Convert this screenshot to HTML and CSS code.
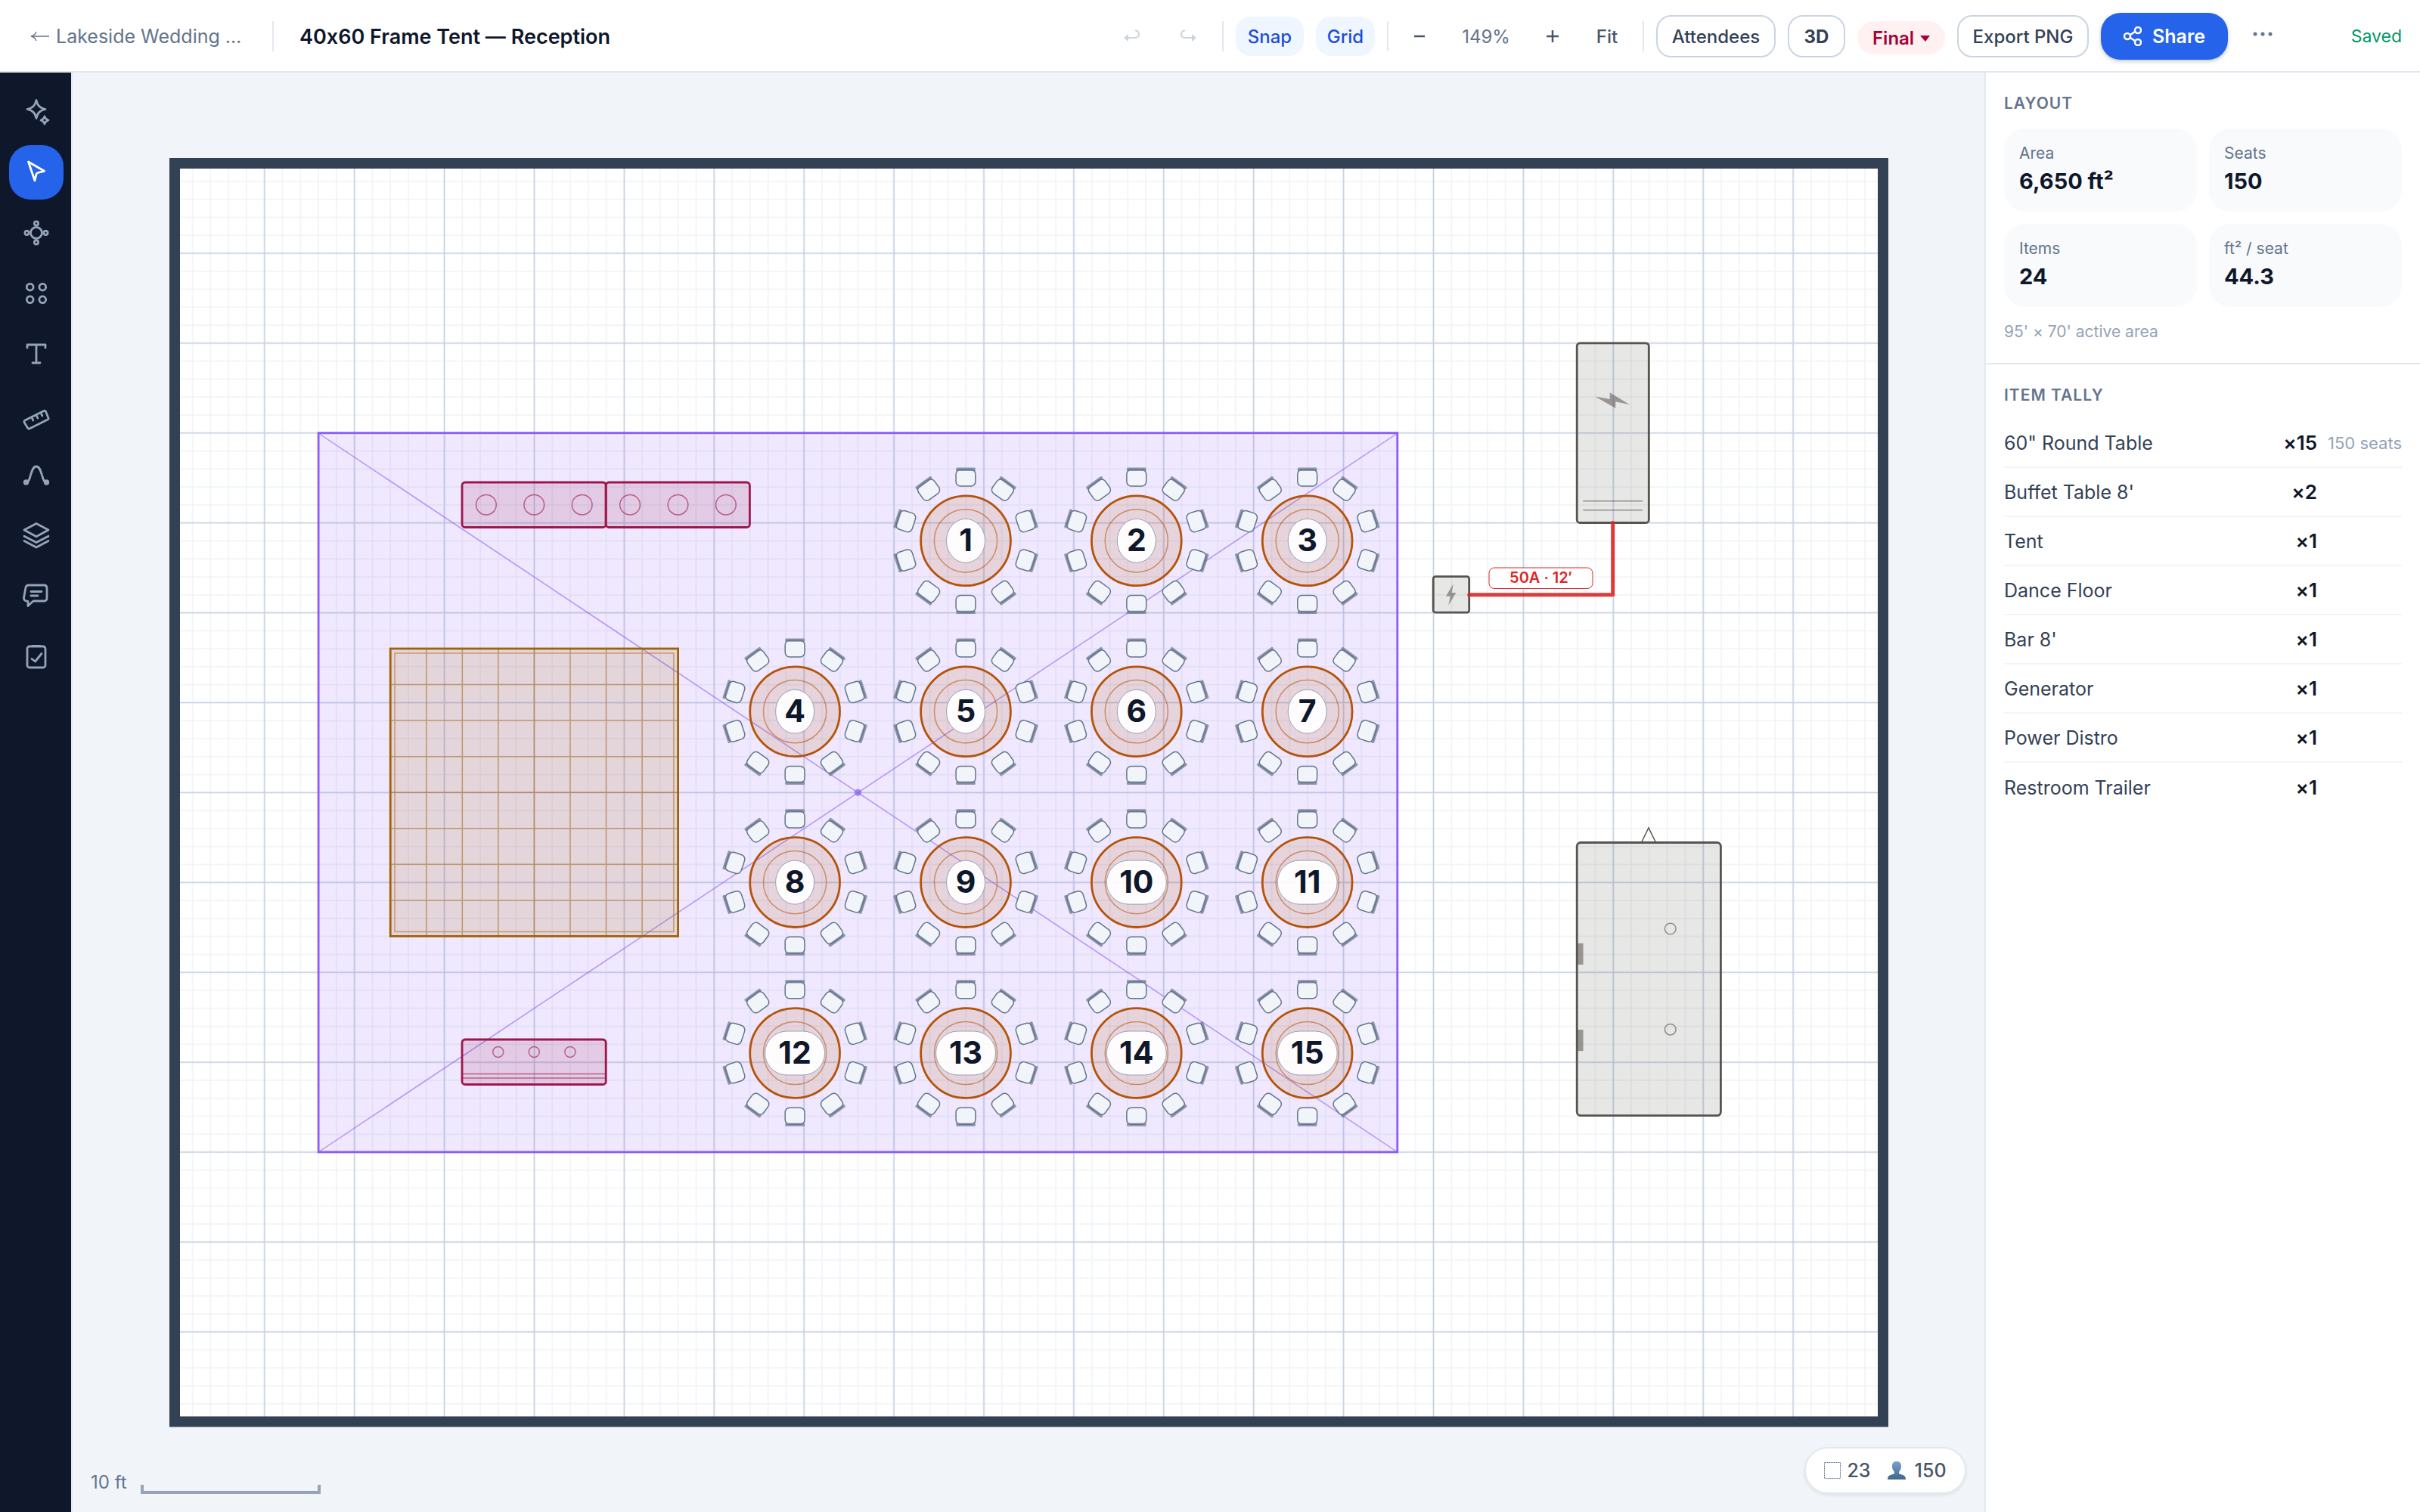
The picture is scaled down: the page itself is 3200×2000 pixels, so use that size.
FILE: index.html
```html
<!DOCTYPE html>
<html lang="en">
<head>
<meta charset="utf-8">
<title>40x60 Frame Tent — Reception</title>
<link rel="stylesheet" href="styles.css">
</head>
<body>
<div class="app">
  <header class="topbar">
    <a class="back" href="#"><svg class="back-arrow" viewBox="0 0 26 16" aria-hidden="true"><path d="M25 8H2M8 2C7 5 5 7 1 8c4 1 6 3 7 6"/></svg>Lakeside Wedding …</a>
    <span class="divider"></span>
    <input class="title" type="text" aria-label="Layout name" value="40x60 Frame Tent — Reception">
    <div class="actions">
      <button class="btn history" aria-label="Undo" disabled><svg viewBox="0 0 22 18"><path d="M15 1c7 2 7 10-1 10H3"/><path class="solid" d="M0 11l6-5v10z"/></svg></button>
      <button class="btn history" aria-label="Redo" disabled><svg viewBox="0 0 22 18"><path d="M7 1c-7 2-7 10 1 10h11"/><path class="solid" d="M22 11l-6-5v10z"/></svg></button>
      <span class="divider"></span>
      <button class="btn toggle snap" aria-pressed="true">Snap</button>
      <button class="btn toggle grid" aria-pressed="true">Grid</button>
      <span class="divider"></span>
      <button class="btn zoom-step" aria-label="Zoom out"><svg viewBox="0 0 16 16"><path d="M1 8h14"/></svg></button>
      <span class="zoom-value">149%</span>
      <button class="btn zoom-step" aria-label="Zoom in"><svg viewBox="0 0 16 16"><path d="M0 8h16M8 0v16"/></svg></button>
      <button class="btn fit">Fit</button>
      <span class="divider"></span>
      <button class="btn outline attendees">Attendees</button>
      <button class="btn outline view-3d">3D</button>
      <span class="status">
        <select aria-label="Status"><option>Final</option><option>Draft</option></select>
        <svg viewBox="0 0 13 8" aria-hidden="true"><path d="M0 0h13L7 8z"/></svg>
      </span>
      <button class="btn outline export">Export PNG</button>
      <button class="btn share"><svg viewBox="0 0 24 26" aria-hidden="true"><circle cx="19" cy="5" r="4"/><circle cx="5" cy="13" r="4"/><circle cx="19" cy="21" r="4"/><path d="M9 11l6-4M9 15l6 4"/></svg>Share</button>
      <button class="btn more" aria-label="More"><svg viewBox="0 0 26 6"><circle cx="3" cy="3" r="2.5"/><circle cx="13" cy="3" r="2.5"/><circle cx="23" cy="3" r="2.5"/></svg></button>
      <span class="saved">Saved</span>
    </div>
  </header>

  <div class="workspace">
    <nav class="tools" aria-label="Tools">
      <button class="tool" aria-label="Assistant"><svg viewBox="0 0 40 40"><path d="M20 4.5c1.6 7.200 4.400 10.200 12 12-7.600 1.800-10.400 4.800-12 12-1.600-7.200-4.400-10.200-12-12 7.600-1.800 10.400-4.800 12-12z"/><path d="M31 26c.8 3 2 4.200 5 5-3 .8-4.200 2-5 5-.8-3-2-4.200-5-5 3-.8 4.200-2 5-5z"/></svg></button>
      <button class="tool active" aria-label="Select"><svg viewBox="0 0 40 40"><path d="M9.500 6L30.500 18.300l-8.500 2.200q-1.500.5-2 2L18 31z"/></svg></button>
      <button class="tool" aria-label="Tables"><svg viewBox="0 0 40 40"><circle cx="20" cy="20" r="7.500"/><circle cx="7.500" cy="20" r="2.600"/><circle cx="32.500" cy="20" r="2.600"/><circle cx="20" cy="7.500" r="2.600"/><circle cx="20" cy="32.500" r="2.600"/></svg></button>
      <button class="tool" aria-label="Items"><svg viewBox="0 0 40 40"><circle cx="11.700" cy="11.700" r="4.400"/><circle cx="28.300" cy="11.700" r="4.400"/><circle cx="11.700" cy="28.300" r="4.400"/><circle cx="28.300" cy="28.300" r="4.400"/></svg></button>
      <button class="tool" aria-label="Text"><svg viewBox="0 0 40 40"><path d="M8 12V8h24v4M20 8v24M15 32h10"/></svg></button>
      <button class="tool" aria-label="Measure"><svg viewBox="0 0 40 40"><path d="M5 28L30 15.500q1.500-.7 2.500.8L36 25q.5 1.400-1 2L11 39q-1.500.7-2.300-.8L4 30.500Q3.500 29 5 28zM14 24l1.800 4M20 21l1.800 4M26 18l1.800 4"/></svg></button>
      <button class="tool" aria-label="Path"><svg viewBox="0 0 40 40"><path d="M7 30C13 30 12 9 20 9s7 21 13 21"/><circle class="dot" cx="6.500" cy="30" r="2.300"/><circle class="dot" cx="33.500" cy="30" r="2.300"/></svg></button>
      <button class="tool" aria-label="Layers"><svg viewBox="0 0 40 40"><path d="M20 4.500L4 13l16 8.800L36 13zM4 21.200l16 8.400 16-8.400M4 27.500l16 8.500 16-8.500"/></svg></button>
      <button class="tool" aria-label="Comments"><svg viewBox="0 0 40 40"><path d="M10 6h20q4 0 4 4v13q0 4-4 4H16l-7 6.500V27.500q-6-.5-5.500-5L6 9q.8-3 4-3zM13 14.500h14M13 20h9"/></svg></button>
      <button class="tool" aria-label="Checklist"><svg viewBox="0 0 40 40"><rect x="8" y="7" width="24" height="28" rx="3"/><path d="M15 6.500h10M14 23.500l4.500 3.500L27 16.500"/></svg></button>
    </nav>

    <main class="stage">
      <svg class="plan" viewBox="96 96 2528 1904" role="img" aria-label="Floor plan">
        <defs>
          <pattern id="feet" patternUnits="userSpaceOnUse" x="219" y="204.200" width="23.780" height="23.780"><path class="minor" d="M11.890 0V23.780M0 11.890H23.780"/></pattern>
          <pattern id="major" patternUnits="userSpaceOnUse" x="171.450" y="156.650" width="118.900" height="118.900"><path class="major" d="M59.450 0V118.900M0 59.450H118.900"/></pattern>
          <g id="chair"><rect class="seat" x="-12.900" y="-94.200" width="25.800" height="22" rx="6"/><rect class="chair-back" x="-12.900" y="-96.800" width="25.800" height="4.400" rx="1.500"/></g>
          <g id="round">
            <use href="#chair"/><use href="#chair" transform="rotate(36)"/><use href="#chair" transform="rotate(72)"/><use href="#chair" transform="rotate(108)"/><use href="#chair" transform="rotate(144)"/><use href="#chair" transform="rotate(180)"/><use href="#chair" transform="rotate(216)"/><use href="#chair" transform="rotate(252)"/><use href="#chair" transform="rotate(288)"/><use href="#chair" transform="rotate(324)"/>
            <circle class="top" r="59.400"/><circle class="top-ring" r="41.600"/>
          </g>
          <g id="one"><use href="#round"/><rect class="badge" x="-25.500" y="-29" width="51" height="58" rx="25.500" ry="29"/></g>
          <g id="two"><use href="#round"/><rect class="badge" x="-39.500" y="-29" width="79" height="58" rx="29"/></g>
        </defs>

        <rect class="floor" x="231" y="216" width="2259" height="1664.500"/>
        <rect fill="url(#feet)" x="231" y="216" width="2259" height="1664.500"/>
        <rect fill="url(#major)" x="231" y="216" width="2259" height="1664.500"/>
        <rect class="wall" x="231" y="216" width="2259" height="1664.500"/>

        <g class="tent">
          <rect x="421.100" y="572.700" width="1426.700" height="951.200"/>
          <path d="M421 573L1848 1524M1848 573L421 1524"/>
          <circle cx="1134.500" cy="1048.300" r="4.600"/>
        </g>

        <g class="catering">
          <rect x="611" y="638" width="190.200" height="59.500" rx="4"/><rect x="801.200" y="638" width="190.200" height="59.500" rx="4"/>
          <circle cx="642.900" cy="667.700" r="13.300"/><circle cx="706.300" cy="667.700" r="13.300"/><circle cx="769.700" cy="667.700" r="13.300"/>
          <circle cx="833.100" cy="667.700" r="13.300"/><circle cx="896.500" cy="667.700" r="13.300"/><circle cx="959.900" cy="667.700" r="13.300"/>
          <rect x="611" y="1375" width="190.200" height="59.500" rx="4"/>
          <path d="M611 1420.500h190M611 1426h190"/>
          <circle cx="658.700" cy="1391.500" r="7"/><circle cx="706.300" cy="1391.500" r="7"/><circle cx="753.900" cy="1391.500" r="7"/>
        </g>

        <g class="dance">
          <rect x="516.200" y="858" width="380.400" height="380.400"/>
          <path d="M563.800 858v380M611.300 858v380M658.900 858v380M706.400 858v380M754 858v380M801.500 858v380M849.100 858v380M516 905.600h380M516 953.100h380M516 1000.700h380M516 1048.200h380M516 1095.800h380M516 1143.300h380M516 1190.900h380M522 864h368.800v368.400H522z"/>
        </g>

        <g class="tables">
          <g transform="translate(1277 715.300)"><use href="#one"/><text y="14">1</text></g>
          <g transform="translate(1502.800 715.300)"><use href="#one"/><text y="14">2</text></g>
          <g transform="translate(1728.700 715.300)"><use href="#one"/><text y="14">3</text></g>
          <g transform="translate(1051.100 941.200)"><use href="#one"/><text y="14">4</text></g>
          <g transform="translate(1277 941.200)"><use href="#one"/><text y="14">5</text></g>
          <g transform="translate(1502.800 941.200)"><use href="#one"/><text y="14">6</text></g>
          <g transform="translate(1728.700 941.200)"><use href="#one"/><text y="14">7</text></g>
          <g transform="translate(1051.100 1167.100)"><use href="#one"/><text y="14">8</text></g>
          <g transform="translate(1277 1167.100)"><use href="#one"/><text y="14">9</text></g>
          <g transform="translate(1502.800 1167.100)"><use href="#two"/><text y="14">10</text></g>
          <g transform="translate(1728.700 1167.100)"><use href="#two"/><text y="14">11</text></g>
          <g transform="translate(1051.100 1393)"><use href="#two"/><text y="14">12</text></g>
          <g transform="translate(1277 1393)"><use href="#two"/><text y="14">13</text></g>
          <g transform="translate(1502.800 1393)"><use href="#two"/><text y="14">14</text></g>
          <g transform="translate(1728.700 1393)"><use href="#two"/><text y="14">15</text></g>
        </g>

        <g class="utility">
          <rect x="2085.200" y="453.800" width="95.100" height="237.700" rx="4"/>
          <path class="bolt" d="M2155 535.300L2128.700 519.300V528L2109.300 524.400L2136.300 540V531.200z"/>
          <path class="detail" d="M2093.300 662.700H2172M2093.300 674.700H2172"/>
          <rect x="1895.200" y="762.700" width="47.500" height="47.500" rx="3"/>
          <path class="bolt" d="M1921.700 772.300L1912 788.700H1917.700L1915.300 800.700L1925.300 784H1919.700z"/>
          <rect x="2085.200" y="1114.500" width="190.200" height="361.200" rx="5"/>
          <path class="hitch" d="M2170.700 1114L2180 1095L2189.300 1114"/>
          <path class="bolt" d="M2086 1247.700h7.500V1276H2086zM2086 1362h7.500v28.300H2086z"/>
          <circle class="detail" cx="2208.700" cy="1228.500" r="7.300"/><circle class="detail" cx="2208.700" cy="1361.700" r="7.300"/>
        </g>

        <g class="cable">
          <path d="M1942.700 786.700H2132.700V691.500"/>
          <rect x="1969" y="751" width="137" height="27.500" rx="7"/>
          <text x="2037.500" y="771">50A · 12′</text>
        </g>
      </svg>
      <div class="scale"><span>10 ft</span><span class="scale-bar"></span></div>
      <div class="counts">
        <svg class="dotted" viewBox="0 0 22 22" aria-hidden="true"><rect x=".5" y=".5" width="21" height="21"/></svg><span>23</span>
        <svg class="person" viewBox="0 0 24 24" aria-hidden="true"><defs><linearGradient id="p" x2="0" y2="1"><stop offset="0" stop-color="#7ba3c8"/><stop offset="1" stop-color="#3f668c"/></linearGradient></defs><path fill="url(#p)" d="M12 0c5 0 6 3 6 7 0 3-1.500 5-3 7 0 2 0 2.500 2 3 4 1 7 2 7 7H0c0-5 3-6 7-7 2-.5 2-1 2-3-1.500-2-3-4-3-7 0-4 1-7 6-7z"/></svg><span>150</span>
      </div>
    </main>

    <aside class="panel">
      <section class="block">
        <h2>Layout</h2>
        <dl class="stats">
          <div><dt>Area</dt><dd>6,650 ft²</dd></div>
          <div><dt>Seats</dt><dd>150</dd></div>
          <div><dt>Items</dt><dd>24</dd></div>
          <div><dt>ft² / seat</dt><dd>44.3</dd></div>
        </dl>
        <p class="note">95' × 70' active area</p>
      </section>
      <section class="block">
        <h2>Item tally</h2>
        <table class="tally">
          <tr><td>60" Round Table</td><td>×15</td><td>150 seats</td></tr>
          <tr><td>Buffet Table 8'</td><td>×2</td><td></td></tr>
          <tr><td>Tent</td><td>×1</td><td></td></tr>
          <tr><td>Dance Floor</td><td>×1</td><td></td></tr>
          <tr><td>Bar 8'</td><td>×1</td><td></td></tr>
          <tr><td>Generator</td><td>×1</td><td></td></tr>
          <tr><td>Power Distro</td><td>×1</td><td></td></tr>
          <tr><td>Restroom Trailer</td><td>×1</td><td></td></tr>
        </table>
      </section>
    </aside>
  </div>
</div>
</body>
</html>
```
FILE: styles.css
```css
* { box-sizing: border-box; }
body { margin: 0; font-family: Inter, "Liberation Sans", sans-serif; font-size: 24px; font-variant-ligatures: no-contextual; color: #0f172a; background: #fff; }
button, input, select { font: inherit; font-variant-ligatures: inherit; color: inherit; margin: 0; }
button { border: 0; padding: 0; background: none; }
svg { display: block; flex: none; }

.app { display: flex; flex-direction: column; height: 100vh; }

/* Top bar */
.topbar { display: flex; align-items: center; gap: 24px; flex: none; height: 96px; padding: 2px 24px 0 40px; border-bottom: 2px solid #e2e8f0; white-space: nowrap; }
.back { display: flex; align-items: center; gap: 8px; width: 296px; color: #64748b; font-size: 25px; text-decoration: none; }
.back-arrow { width: 26px; height: 16px; fill: none; stroke: #64748b; stroke-width: 1.3; }
.divider { flex: none; width: 2px; height: 40px; background: #e2e8f0; }
.title { flex: none; width: 424px; height: 56px; padding: 0 0 0 10px; border: 0; border-right: 2px solid transparent; background: none; font-size: 27px; font-weight: 600; }
.actions { display: flex; align-items: center; gap: 16px; margin-left: auto; }
.btn { display: flex; align-items: center; justify-content: center; flex: none; height: 52px; border-radius: 20px; font-weight: 500; color: #475569; }
.history { width: 58px; }
.history svg { width: 22px; height: 18px; fill: none; stroke: #cbd5e1; stroke-width: 2; }
.history .solid { fill: #cbd5e1; stroke: none; }
.toggle { background: #eff6ff; color: #1d4ed8; }
.snap { width: 90px; }
.grid { width: 78px; }
.zoom-step { width: 50px; }
.zoom-step svg { width: 16px; height: 16px; stroke: #475569; stroke-width: 2.5; }
.zoom-value { width: 94px; text-align: center; color: #64748b; }
.fit { width: 62px; }
.outline { height: 56px; border: 2px solid #cbd5e1; color: #334155; background: #fff; }
.attendees { width: 158px; }
.view-3d { width: 76px; font-weight: 700; }
.export { width: 174px; }
.status { position: relative; width: 116px; height: 44px; margin-top: 4px; }
.status select { width: 100%; height: 100%; padding: 0 0 0 20px; border: 0; border-radius: 22px; background: #fff1f2; color: #a50036; font-weight: 600; font-size: 24px; appearance: none; }
.status svg { position: absolute; right: 20px; top: 19px; width: 13px; height: 8px; fill: #a50036; pointer-events: none; }
.share { gap: 14px; width: 168px; height: 62px; border-radius: 26px; background: #2563eb; color: #fff; font-size: 25px; font-weight: 600; box-shadow: 0 2px 5px #0f172a40; }
.share svg { width: 24px; height: 26px; fill: none; stroke: #fff; stroke-width: 2.5; }
.more { width: 60px; padding-bottom: 6px; }
.more svg { width: 26px; height: 6px; fill: #64748b; }
.saved { width: 138px; text-align: right; font-size: 23px; color: #009966; }

/* Workspace */
.workspace { display: flex; flex: 1; min-height: 0; }
.tools { display: flex; flex-direction: column; gap: 8px; flex: none; width: 96px; padding: 16px 10px 16px 12px; background: #0f172a; border-right: 2px solid #e2e8f0; }
.tool { display: flex; align-items: center; justify-content: center; width: 72px; height: 72px; border-radius: 28px; color: #94a3b8; }
.tool.active { background: #2563eb; color: #fff; }
.tool svg { width: 40px; height: 40px; overflow: visible; fill: none; stroke: currentColor; stroke-width: 2.8; stroke-linecap: round; stroke-linejoin: round; }
.tool .dot { fill: currentColor; }
.stage { position: relative; flex: 1; min-width: 0; background: #f1f5f9; }
.plan { width: 100%; height: 100%; }

/* Floor plan */
.floor { fill: #fff; }
.minor { stroke: #eef3f8; stroke-width: 1.5; fill: none; }
.major { stroke: #c5d0e0; stroke-width: 1.6; fill: none; }
.wall { fill: none; stroke: #334155; stroke-width: 14; }
.tent rect { fill: #8b5cf624; stroke: #8b5cf6; stroke-width: 2.8; }
.tent path { fill: none; stroke: #8b5cf6; stroke-width: 1.5; opacity: .6; }
.tent circle { fill: #8b5cf6; opacity: .7; }
.catering rect { fill: #9d174d24; stroke: #9d174d; stroke-width: 2.8; }
.catering circle, .catering path { fill: none; stroke: #9d174d; stroke-width: 1.5; opacity: .6; }
.dance rect { fill: #a1620724; stroke: #a16207; stroke-width: 2.8; }
.dance path { fill: none; stroke: #a16207; stroke-width: 1.5; opacity: .5; }
.seat { fill: #f1f5f9; stroke: #64748b; stroke-width: 1.5; }
.chair-back { fill: #64748b; opacity: .7; }
.top { fill: #b4530924; stroke: #b45309; stroke-width: 2.8; }
.top-ring { fill: none; stroke: #b45309; stroke-width: 1.5; opacity: .55; }
.badge { fill: #fff; fill-opacity: .93; stroke: #94a3b8; stroke-width: 1; }
.tables text { font-size: 41px; font-weight: 700; fill: #0f172a; text-anchor: middle; }
.utility rect { fill: #57534e24; stroke: #57534e; stroke-width: 2.8; }
.utility .bolt { fill: #57534e; opacity: .55; }
.utility .detail { fill: none; stroke: #57534e; stroke-width: 1.5; opacity: .6; }
.utility .hitch { fill: none; stroke: #57534e; stroke-width: 1.5; }
.cable path { fill: none; stroke: #dc2626; stroke-width: 5; stroke-linecap: round; stroke-linejoin: round; opacity: .9; }
.cable rect { fill: #fff; stroke: #dc2626; stroke-width: 1; }
.cable text { font-size: 20px; font-weight: 600; fill: #dc2626; text-anchor: middle; }

.scale { position: absolute; left: 24px; bottom: 24px; display: flex; align-items: flex-end; gap: 18px; font-size: 24px; line-height: 30px; color: #64748b; }
.scale-bar { width: 238px; height: 12px; border: 4px solid #94a3b8; border-top: 0; }
.counts { position: absolute; right: 24px; bottom: 24px; display: flex; align-items: center; justify-content: center; gap: 8px; width: 214px; height: 62px; border: 2px solid #e2e8f0; border-radius: 31px; background: #fff; color: #475569; font-size: 25px; font-weight: 500; box-shadow: 0 2px 4px #0f172a14; }
.dotted { width: 22px; height: 22px; fill: none; stroke: #64748b; stroke-dasharray: 2 1; }
.person { width: 24px; height: 24px; margin: 0 4px 0 14px; }

/* Side panel */
.panel { flex: none; width: 576px; border-left: 2px solid #e2e8f0; background: #fff; }
.block { padding: 25px 24px 24px; }
.block + .block { border-top: 2px solid #e2e8f0; }
h2 { margin: 0 0 15px; font-size: 21px; line-height: 32px; font-weight: 600; letter-spacing: 1px; text-transform: uppercase; color: #64748b; }
.stats { display: grid; grid-template-columns: 1fr 1fr; gap: 16px; margin: 0 0 17px; padding-top: 2px; }
.stats div { padding: 17px 20px 19px; border-radius: 28px; background: #f8fafc; }
dt { font-size: 21px; line-height: 32px; color: #64748b; }
dd { margin: 0; font-size: 29px; line-height: 42px; font-weight: 700; }
.note { margin: 0; padding-bottom: 1px; font-size: 21px; line-height: 32px; color: #94a3b8; }
.tally { width: 100%; border-collapse: separate; border-spacing: 0; font-size: 25px; line-height: 32px; color: #334155; }
.tally td { height: 65px; padding: 1px 0 0; border-bottom: 2px solid #f1f5f9; }
.tally tr:last-child td { border-bottom: 0; }
.tally td:nth-child(2) { text-align: right; font-size: 26px; font-weight: 600; color: #0f172a; }
.tally td:nth-child(3) { width: 112px; text-align: right; font-size: 22px; color: #94a3b8; }
```
